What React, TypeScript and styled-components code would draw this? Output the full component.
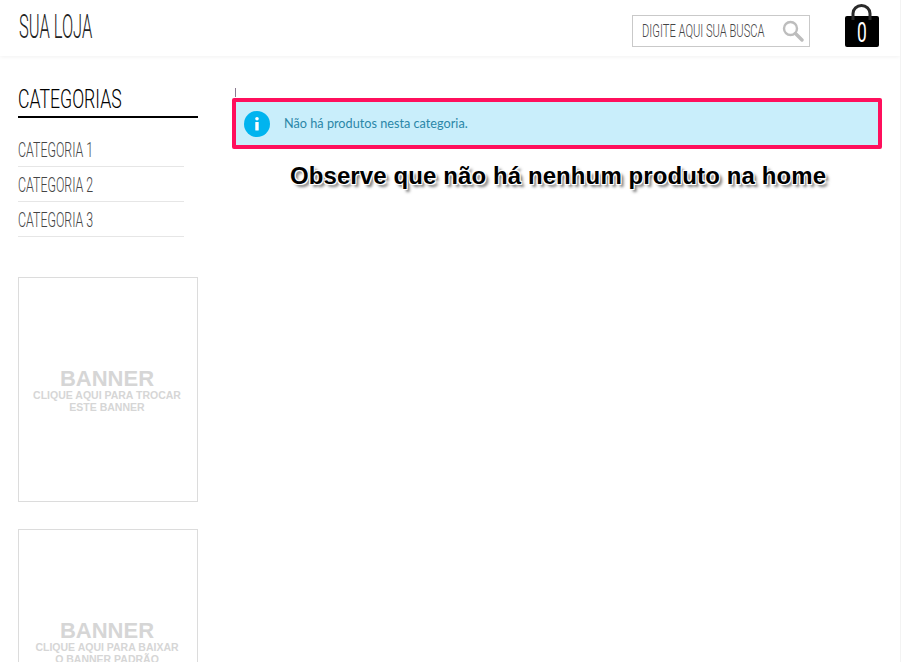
import React from "react";
import styled, { createGlobalStyle } from "styled-components";

const Global = createGlobalStyle`
  html, body { margin: 0; padding: 0; background: #fff; height: 662px; overflow: hidden; }
  body { font-family: "Liberation Sans", Arial, sans-serif; }
`;

const Page = styled.div`
  width: 901px;
  height: 662px;
  box-sizing: border-box;
  border-right: 1px solid #f3f3f3;
  overflow: hidden;
  display: flex;
  flex-direction: column;
`;

const Header = styled.header`
  height: 56px;
  flex: none;
  box-sizing: border-box;
  display: flex;
  align-items: flex-start;
  justify-content: space-between;
  padding: 0 20px 0 19px;
  background: #fff;
  box-shadow: 0 1px 4px rgba(0, 0, 0, 0.06);
`;

const Condensed = styled.span<{ $size: number; $sx: number; $color: string }>`
  display: block;
  width: 400px;
  font-family: "Roboto", "Liberation Sans", sans-serif;
  font-weight: 300;
  font-size: ${(p) => p.$size}px;
  color: ${(p) => p.$color};
  white-space: nowrap;
  transform: scaleX(${(p) => p.$sx});
  transform-origin: left center;
`;

const Logo = styled.div`
  width: 80px;
  height: 38px;
  margin-top: 7px;
  line-height: 38px;
`;

const HeaderRight = styled.div`
  display: flex;
  align-items: flex-start;
  gap: 34px;
`;

const Search = styled.div`
  width: 178px;
  height: 32px;
  margin-top: 15px;
  box-sizing: border-box;
  border: 1px solid #c9c9c9;
  padding: 0 5px 0 9px;
  display: flex;
  align-items: center;
  justify-content: space-between;
  overflow: hidden;
`;

const Placeholder = styled.div`
  width: 130px;
  line-height: 30px;
  overflow: hidden;
`;

const Cart = styled.div`
  position: relative;
  width: 36px;
  height: 44px;
  margin-top: 4px;
`;

const CartCount = styled.span`
  position: absolute;
  left: 0;
  right: 0;
  top: 16px;
  text-align: center;
  font-family: "Roboto", "Liberation Sans", sans-serif;
  font-weight: 400;
  font-size: 28px;
  line-height: 26px;
  color: #fff;
  transform: scaleX(0.62);
`;

const Body = styled.div`
  flex: 1;
  display: flex;
  padding: 0 18px 0 18px;
  gap: 34px;
  min-height: 0;
`;

const Sidebar = styled.aside`
  width: 180px;
  flex: none;
  padding-top: 27px;
`;

const SideTitle = styled.div`
  height: 33px;
  line-height: 33px;
  border-bottom: 2px solid #000;
`;

const CatList = styled.ul`
  list-style: none;
  margin: 14px 0 0;
  padding: 0;
  width: 166px;
`;

const CatItem = styled.li`
  height: 34px;
  line-height: 36px;
  border-bottom: 1px solid #e6e6e6;
  overflow: hidden;
`;

const Banner = styled.div<{ $pad: number; $h: number }>`
  width: 180px;
  height: ${(p) => p.$h}px;
  box-sizing: border-box;
  border: 1px solid #dcdcdc;
  padding: ${(p) => p.$pad}px 2px 0 0;
  text-align: center;
  color: #d6d6d6;
  font-weight: 700;
  margin-top: 40px;
  & + & { margin-top: 27px; }
`;

const BannerTitle = styled.div`
  font-size: 22px;
  line-height: 21px;
`;

const BannerText = styled.div`
  font-size: 10.5px;
  line-height: 12px;
  padding: 0 12px;
`;

const Main = styled.main`
  flex: 1;
  min-width: 0;
  padding-top: 30px;
`;

const Tick = styled.div`
  width: 1px;
  height: 9px;
  margin: 2px 0 1px 3px;
  background: #8a7a90;
`;

const Alert = styled.div`
  height: 51px;
  box-sizing: border-box;
  border: 4px solid #ff0f5c;
  border-radius: 2px;
  background: #c9eefb;
  display: flex;
  align-items: center;
  padding-left: 8px;
  gap: 14px;
`;

const AlertText = styled.span`
  font-family: "Lato", "Open Sans", sans-serif;
  font-size: 12.7px;
  color: #2b87a8;
  padding-bottom: 1px;
`;

const Note = styled.div`
  margin-top: 13px;
  padding-left: 2px;
  text-align: center;
  font-size: 24px;
  line-height: 28px;
  font-weight: 700;
  letter-spacing: 0.1px;
  color: #000;
  text-shadow: 1px 1px 0 #fff, -1px -1px 0 #fff, 1px -1px 0 #fff, -1px 1px 0 #fff, 3px 3px 3px #777;
`;

export default function App() {
  return (
    <Page>
      <Global />
      <Header>
        <Logo>
          <Condensed $size={34} $sx={0.485} $color="#222">SUA LOJA</Condensed>
        </Logo>
        <HeaderRight>
          <Search>
            <Placeholder>
              <Condensed $size={18} $sx={0.62} $color="#444">DIGITE AQUI SUA BUSCA</Condensed>
            </Placeholder>
            <svg width="22" height="22" viewBox="0 0 22 22" fill="none" stroke="#bdbdbd">
              <circle cx="8.5" cy="8.5" r="6.5" strokeWidth="2.4" />
              <line x1="13.5" y1="13.5" x2="20" y2="20" strokeWidth="3.4" strokeLinecap="round" />
            </svg>
          </Search>
          <Cart>
            <svg width="36" height="44" viewBox="0 0 36 44">
              <path d="M3 12 H33 a2 2 0 0 1 2 2 V41 a2 2 0 0 1 -2 2 H3 a2 2 0 0 1 -2 -2 V14 a2 2 0 0 1 2 -2 Z" fill="#000" />
              <path d="M9 16 V9.5 a8.5 8 0 0 1 17 0 V16" fill="none" stroke="#2a2a2a" strokeWidth="3" />
            </svg>
            <CartCount>0</CartCount>
          </Cart>
        </HeaderRight>
      </Header>
      <Body>
        <Sidebar>
          <SideTitle>
            <Condensed $size={26} $sx={0.68} $color="#000">CATEGORIAS</Condensed>
          </SideTitle>
          <CatList>
            {["CATEGORIA 1", "CATEGORIA 2", "CATEGORIA 3"].map((c) => (
              <CatItem key={c}>
                <Condensed $size={21} $sx={0.59} $color="#444">{c}</Condensed>
              </CatItem>
            ))}
          </CatList>
          <Banner $pad={90} $h={225}>
            <BannerTitle>BANNER</BannerTitle>
            <BannerText>CLIQUE AQUI PARA TROCAR ESTE BANNER</BannerText>
          </Banner>
          <Banner $pad={90} $h={225}>
            <BannerTitle>BANNER</BannerTitle>
            <BannerText>CLIQUE AQUI PARA BAIXAR O BANNER PADRÃO</BannerText>
          </Banner>
        </Sidebar>
        <Main>
          <Tick />
          <Alert>
            <svg width="26" height="26" viewBox="0 0 26 26">
              <circle cx="13" cy="13" r="13" fill="#00b4ef" />
              <circle cx="13" cy="7.8" r="1.8" fill="#fff" />
              <rect x="11.3" y="11" width="3.4" height="8.5" rx="0.6" fill="#fff" />
            </svg>
            <AlertText>Não há produtos nesta categoria.</AlertText>
          </Alert>
          <Note>Observe que não há nenhum produto na home</Note>
        </Main>
      </Body>
    </Page>
  );
}
